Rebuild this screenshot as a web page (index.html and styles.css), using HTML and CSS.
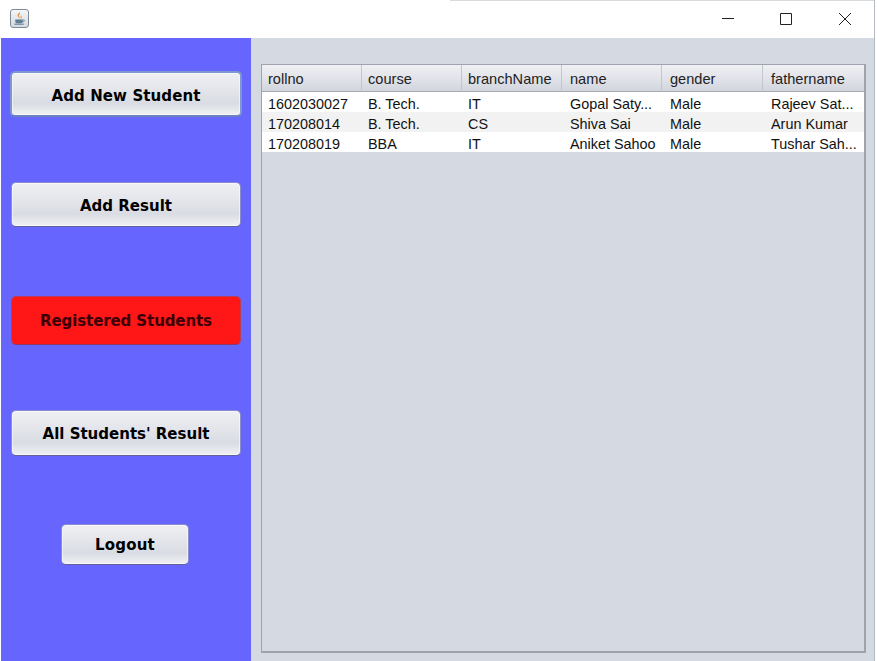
FILE: index.html
```html
<!DOCTYPE html>
<html lang="en">
<head>
    <meta charset="UTF-8">
    <title>Students</title>
    <link rel="stylesheet" href="styles.css">
</head>
<body>
    <div class="window">
        <div class="titleBar">
            <div class="appIcon">
                <svg width="17" height="17" viewBox="0 0 18 18">
                    <path d="M9.500 2c1 2-2 3-1 5 .3.700 1 1.200 1 2-1-1-3-2-2.500-4 .3-1.300 2-1.800 2.500-3z" fill="#e8873a"/>
                    <path d="M11.500 5c-1 1-2 1.500-1.500 3 .2.500.5 1 .3 1.500 1-.7 1.500-1.500 1-2.500-.3-.7-.3-1.200.2-2z" fill="#e8a060"/>
                    <path d="M4.500 10h8v2.500c0 1-1 1.500-2 1.500h-4c-1 0-2-.5-2-1.500z" fill="#5d7f96"/>
                    <path d="M12.500 10.500c1.500-.3 2 .5 1.500 1.300-.4.600-1.200.800-1.800.700" fill="none" stroke="#5d7f96"/>
                    <path d="M3.500 15h10" stroke="#4c6d86" stroke-width="1"/>
                </svg>
            </div>
            <div class="winControls">
                <svg width="14" height="14" viewBox="0 0 14 14"><path d="M2 6.500h12" stroke="#222" fill="none"/></svg>
                <svg width="14" height="14" viewBox="0 0 14 14"><path d="M1.500 1.500h11v11h-11z" stroke="#222" fill="none"/></svg>
                <svg width="14" height="14" viewBox="0 0 14 14"><path d="M1 1l12 12M13 1L1 13" stroke="#222" fill="none"/></svg>
            </div>
        </div>
        <div class="mainArea">
            <div class="sideBar">
                <button class="btn focused">Add New Student</button>
                <button class="btn second">Add Result</button>
                <button class="btn active">Registered Students</button>
                <button class="btn fourth">All Students' Result</button>
                <button class="btn logout">Logout</button>
            </div>
            <div class="content">
                <div class="tableBox">
                    <table>
                        <colgroup>
                            <col class="colWide">
                            <col class="colWide">
                            <col class="colWide">
                            <col class="colWide">
                            <col class="colGender">
                            <col class="colLast">
                        </colgroup>
                        <thead>
                            <tr>
                                <th>rollno</th>
                                <th>course</th>
                                <th>branchName</th>
                                <th>name</th>
                                <th>gender</th>
                                <th>fathername</th>
                            </tr>
                        </thead>
                        <tbody>
                            <tr>
                                <td>1602030027</td>
                                <td>B. Tech.</td>
                                <td>IT</td>
                                <td>Gopal Saty...</td>
                                <td>Male</td>
                                <td>Rajeev Sat...</td>
                            </tr>
                            <tr>
                                <td>170208014</td>
                                <td>B. Tech.</td>
                                <td>CS</td>
                                <td>Shiva Sai</td>
                                <td>Male</td>
                                <td>Arun Kumar</td>
                            </tr>
                            <tr>
                                <td>170208019</td>
                                <td>BBA</td>
                                <td>IT</td>
                                <td>Aniket Sahoo</td>
                                <td>Male</td>
                                <td>Tushar Sah...</td>
                            </tr>
                        </tbody>
                    </table>
                </div>
            </div>
        </div>
    </div>
</body>
</html>
```

FILE: styles.css
```css
* {
    margin: 0;
    padding: 0;
    box-sizing: border-box;
}

html, body {
    height: 100%;
    background: #ffffff;
    overflow: hidden;
}

.window {
    width: 875px;
    height: 661px;
    border-right: 1px solid #b4b8c0;
    display: flex;
    flex-direction: column;
    font-family: "Liberation Sans", Arial, sans-serif;
}

.titleBar {
    height: 38px;
    background: linear-gradient(#d8dade, #d8dade) 450px 0 / 100% 1px no-repeat, #ffffff;
    display: flex;
    align-items: center;
    justify-content: space-between;
    padding: 0 22px 0 10px;
}

.appIcon {
    width: 19px;
    height: 19px;
    margin-bottom: 2px;
    background: linear-gradient(180deg, #f4f6f8, #d4dae0);
    border: 1px solid #7f8b99;
    border-radius: 3px;
    display: flex;
}

.winControls {
    display: flex;
    gap: 45px;
}

.mainArea {
    flex: 1;
    display: flex;
    min-height: 0;
}

.sideBar {
    width: 251px;
    border-left: 1px solid #ffffff;
    background: #6666ff;
    padding-top: 33px;
    display: flex;
    flex-direction: column;
    align-items: center;
}

.btn {
    width: 230px;
    height: 45px;
    padding-top: 2px;
    font-family: "DejaVu Sans", sans-serif;
    font-size: 15px;
    font-weight: bold;
    color: #000000;
    border: 1px solid #8a8dcb;
    border-bottom-color: #5f6198;
    border-radius: 5px;
    background: linear-gradient(180deg, #eff0f3 0%, #e2e4e9 45%, #d9dce3 72%, #f0f1f4 100%);
    box-shadow: inset 0 0 0 1px rgba(255, 255, 255, 0.55);
    cursor: pointer;
}

.focused {
    border: 2px solid #7d97cf;
    border-bottom-color: #6a83bd;
    height: 46px;
    width: 232px;
    padding-top: 4px;
    letter-spacing: 0.1px;
}

.second {
    margin-top: 65px;
}

.active {
    margin-top: 69px;
    height: 49px;
    padding-top: 0;
    background: #ff1616;
    border-color: #b4405a;
    border-bottom-color: #8f3a66;
    box-shadow: none;
    color: #3a0006;
    letter-spacing: -0.1px;
}

.fourth {
    margin-top: 65px;
    height: 46px;
}

.logout {
    margin-top: 68px;
    margin-right: 2px;
    padding-top: 0;
    width: 128px;
    height: 41px;
    letter-spacing: 0.2px;
}

.content {
    flex: 1;
    background: #d5d9e2;
    padding: 26px 8px 8px 10px;
    display: flex;
}

.tableBox {
    flex: 1;
    border: 1px solid #9ea3ad;
    border-right-width: 2px;
    border-bottom-width: 2px;
}

table {
    width: 602px;
    border-collapse: separate;
    border-spacing: 0;
    table-layout: fixed;
    font-size: 14.4px;
    line-height: 16px;
    color: #111111;
}

.colWide {
    width: 100px;
}

.colGender {
    width: 101px;
}

.colLast {
    width: 101px;
}

th {
    height: 27px;
    padding: 2px 0 0 6px;
    text-align: left;
    font-size: 14.6px;
    font-weight: normal;
    color: #222222;
    background: linear-gradient(180deg, #eef0f3 0%, #e2e4ea 50%, #d2d5dd 100%);
    border-right: 1px solid #c2c5cf;
    border-bottom: 1px solid #a6aab4;
}

th:last-child {
    border-right: none;
}

td {
    height: 20px;
    padding: 4px 0 0 6px;
    white-space: nowrap;
    overflow: hidden;
    background: #ffffff;
}

th:nth-child(n+4), td:nth-child(n+4) {
    padding-left: 8px;
}

tbody tr:nth-child(even) td {
    background: #f2f2f2;
}
```
